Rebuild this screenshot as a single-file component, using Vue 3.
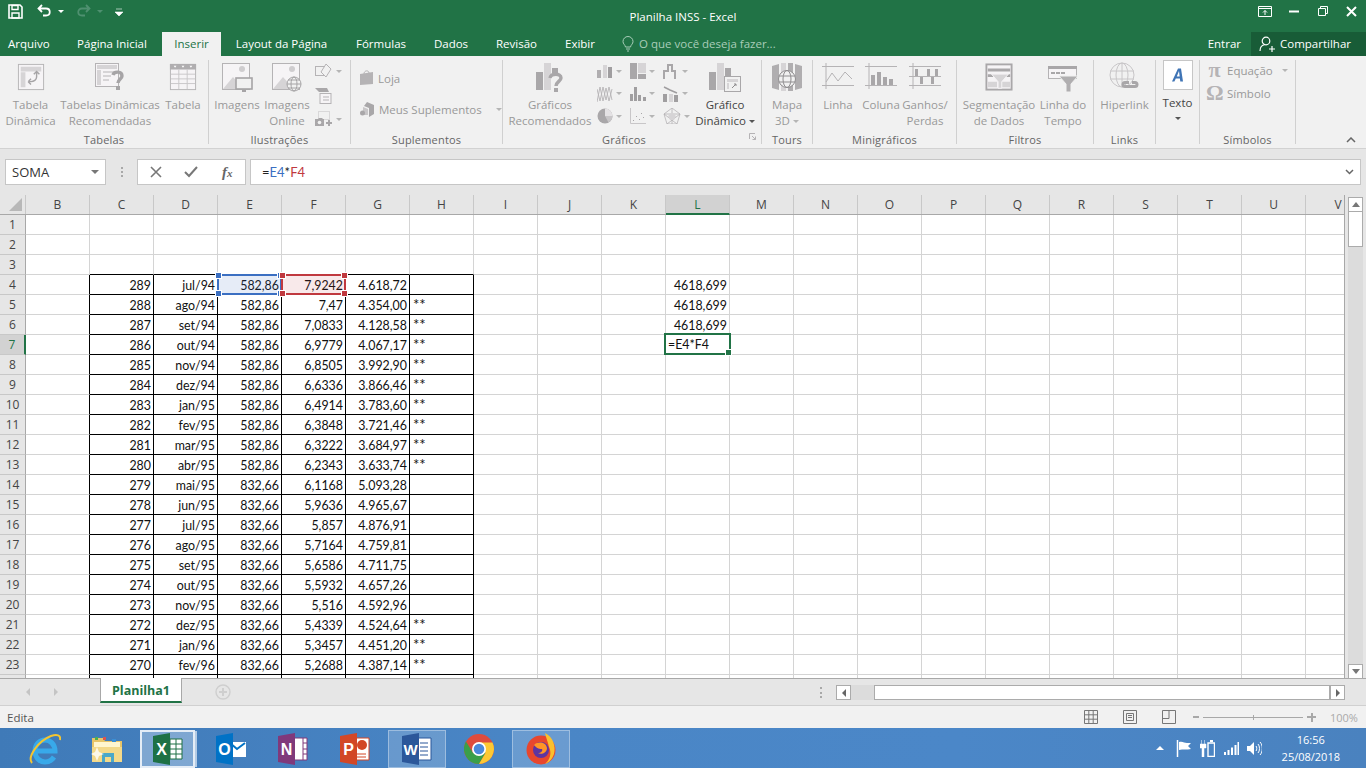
<template>
  <div class="window">
    <!-- title bar -->
    <header class="titlebar">
      <div class="qat">
        <svg class="qat-save" width="15" height="15" viewBox="0 0 15 15"><path d="M1 1h11l2 2v11H1z" fill="none" stroke="#fff" stroke-width="1.6"/><path d="M4 1.500h6v4H4zM4 9h7v5H4z" fill="none" stroke="#fff" stroke-width="1.400"/></svg>
        <svg class="qat-undo" width="15" height="13" viewBox="0 0 15 13"><path d="M5 1 1.500 4.500 5 8M2 4.500h7c5 0 5 7 0 7H6" fill="none" stroke="#fff" stroke-width="1.800"/></svg>
        <span class="qat-caret"></span>
        <svg class="qat-redo" width="15" height="13" viewBox="0 0 15 13"><path d="M10 1l3.500 3.500L10 8M13 4.500H6c-5 0-5 7 0 7h3" fill="none" stroke="#4f9070" stroke-width="1.800"/></svg>
        <span class="qat-caret dim"></span>
        <svg class="qat-more" width="8" height="8" viewBox="0 0 8 8"><path d="M1 1h6M0 4h8L4 8z" fill="#fff" stroke="#fff" stroke-width=".6"/></svg>
      </div>
      <div class="doc-title">Planilha INSS - Excel</div>
      <div class="win-controls">
        <svg width="14" height="11" viewBox="0 0 14 11"><path d="M.5.500h13v10H.500zM1 2.500h12M7 9V4.500M5 6.500l2-2 2 2" fill="none" stroke="#fff"/></svg>
        <svg width="10" height="10" viewBox="0 0 10 10"><path d="M0 5.500h10" stroke="#fff" stroke-width="2"/></svg>
        <svg width="10" height="10" viewBox="0 0 10 10"><path d="M.5 2.500h7v7h-7zM2.500 2.500v-2h7v7h-2" fill="none" stroke="#fff"/></svg>
        <svg width="11" height="11" viewBox="0 0 11 11"><path d="M1 1l9 9M10 1l-9 9" stroke="#fff" stroke-width="2"/></svg>
      </div>
    </header>

    <!-- ribbon tabs -->
    <nav class="tabs">
      <span v-for="t in tabs" :key="t.label" class="tab" :class="{ current: t.current }" :style="{ width: t.width + 'px' }">{{ t.label }}</span>
      <span class="tell-me">
        <svg width="12" height="16" viewBox="0 0 12 16"><path d="M3.500 11C3 8.500 1 8 1 5.500a5 5 0 0 1 10 0C11 8 9 8.500 8.500 11zM4 13h4M5 15h2" fill="none" stroke="#a9cdb9"/></svg>
        O que você deseja fazer...
      </span>
      <span class="signin">Entrar</span>
      <span class="share">
        <svg width="16" height="16" viewBox="0 0 16 16"><circle cx="7" cy="5" r="3.800" fill="none" stroke="#fff" stroke-width="1.200"/><path d="M1 15c0-4 2-6 5-6.500M10 13h6M13 10v6" fill="none" stroke="#fff" stroke-width="1.200"/></svg>
        Compartilhar
      </span>
    </nav>

    <!-- ribbon -->
    <section class="ribbon">
      <div class="group g-tables">
        <div class="group-body">
          <div class="big w61">
            <svg width="28" height="30" viewBox="0 0 30 30"><rect x="1.500" y="1.500" width="27" height="27" fill="#f6f4f6" stroke="#b5b3b5"/><path d="M4 4h22v5H4zM4 10h5v16H4z" fill="#d6d4d6"/><path d="M21 9v6c0 3-3 5-6 5h-3M12 20l3-3M12 20l3 3M18 12l3-3 3 3" fill="none" stroke="#a6a4a6" stroke-width="1.500"/></svg>
            <span>Tabela<br />Dinâmica</span>
          </div>
          <div class="big w100 pull">
            <svg width="32" height="30" viewBox="0 0 32 30"><rect x="1.500" y="1.500" width="23" height="23" fill="#f6f4f6" stroke="#b5b3b5"/><path d="M3 3h20v4H3zM3 8h4v15H3zM9 9h12v2H9zM9 13h8v2H9zM9 17h6v2H9z" fill="#d6d4d6"/><path d="M19 13c1-4 9-4 9 1 0 3-4 3-4 7" fill="none" stroke="#a6a4a6" stroke-width="3.400"/><rect x="22" y="24" width="4" height="4" fill="#a6a4a6"/></svg>
            <span>Tabelas Dinâmicas<br />Recomendadas</span>
          </div>
          <div class="big w46">
            <svg width="28" height="30" viewBox="0 0 30 30"><rect x="1.500" y="1.500" width="27" height="27" fill="#f6f4f6" stroke="#b5b3b5"/><path d="M1 1h28v6H1z" fill="#b0aeb0"/><path d="M5 3h3l-1.500 2zM13.500 3h3L15 5zM22 3h3l-1.500 2z" fill="#fff"/><path d="M2 12h26M2 17h26M2 22h26M10.500 7v21M19.500 7v21" stroke="#c8c6c8" fill="none"/></svg>
            <span>Tabela</span>
          </div>
        </div>
        <div class="group-label">Tabelas</div>
      </div>

      <div class="group g-illus">
        <div class="group-body">
          <div class="big w50 push">
            <svg width="32" height="30" viewBox="0 0 32 30"><rect x="1.500" y="1.500" width="27" height="26" fill="#f6f4f6" stroke="#b5b3b5"/><circle cx="21" cy="7" r="3" fill="#cfcdcf"/><path d="M2 27l10-12 8 9v3z" fill="#d6d4d6"/><rect x="15" y="16" width="16" height="11" fill="#f1f1f1" stroke="#a6a4a6" stroke-width="1.600"/><path d="M21 28h4v2h-4z" fill="#a6a4a6"/></svg>
            <span>Imagens</span>
          </div>
          <div class="big w50">
            <svg width="32" height="30" viewBox="0 0 32 30"><rect x="1.500" y="1.500" width="27" height="26" fill="#f6f4f6" stroke="#b5b3b5"/><circle cx="21" cy="7" r="3" fill="#cfcdcf"/><path d="M2 27l10-12 8 9v3z" fill="#d6d4d6"/><circle cx="23" cy="22" r="7" fill="#f1f1f1" stroke="#a6a4a6"/><ellipse cx="23" cy="22" rx="3" ry="7" fill="none" stroke="#a6a4a6"/><path d="M16 22h14M17 18h12M17 26h12" stroke="#a6a4a6" fill="none"/></svg>
            <span>Imagens<br />Online</span>
          </div>
          <div class="small-col">
            <div class="small-ic">
              <svg width="18" height="16" viewBox="0 0 18 16"><rect x=".5" y="3.500" width="9" height="9" fill="none" stroke="#b5b3b5"/><path d="M11 1l5 5-5 8-5-5z" fill="#f1f1f1" stroke="#b5b3b5"/></svg>
              <i class="caret"></i>
            </div>
            <div class="small-ic">
              <svg width="17" height="17" viewBox="0 0 17 17"><path d="M0 1h12l2 4H4z" fill="#a9a7a9"/><rect x="5" y="6.500" width="11" height="10" fill="#f6f4f6" stroke="#b5b3b5"/><path d="M8 10h6M8 13h6" stroke="#b5b3b5"/></svg>
            </div>
            <div class="small-ic">
              <svg width="18" height="16" viewBox="0 0 18 16"><rect x="3.500" y=".5" width="11" height="8" fill="none" stroke="#c0bec0" stroke-dasharray="1 1"/><path d="M0 8h3l1-1h3l1 1h1v7H0z" fill="#a9a7a9"/><path d="M11 12h6M14 9v6" stroke="#a9a7a9" stroke-width="2"/><circle cx="4.500" cy="11.500" r="1.800" fill="#f1f1f1"/></svg>
              <i class="caret"></i>
            </div>
          </div>
        </div>
        <div class="group-label">Ilustrações</div>
      </div>

      <div class="group g-addins">
        <div class="group-body addins">
          <div class="line-btn">
            <svg width="14" height="16" viewBox="0 0 14 16"><path d="M0 4l13-2v12L0 15z" fill="#b5b3b5"/><path d="M4 4c0-4 5-4 5-1" fill="none" stroke="#b5b3b5"/></svg>
            Loja
          </div>
          <div class="line-btn">
            <svg width="15" height="15" viewBox="0 0 15 15"><path d="M7 0l7 3v9l-5 3V6L4 4z" fill="#a9a7a9"/><path d="M3 5l5 2v6H3z" fill="#c8c6c8"/><circle cx="2.500" cy="11" r="2.500" fill="#a9a7a9"/></svg>
            Meus Suplementos
            <i class="caret wide"></i>
          </div>
        </div>
        <div class="group-label">Suplementos</div>
      </div>

      <div class="group g-charts">
        <div class="group-body">
          <div class="big w94">
            <svg width="28" height="30" viewBox="0 0 28 30"><path d="M0 10h7v18H0z" fill="#a9a7a9"/><path d="M8 1h7v27H8z" fill="#d6d4d6"/><path d="M16 6h6v5h-6z" fill="#a9a7a9"/><path d="M14 16c1-5 11-5 11 0 0 3-5 4-5 8" fill="none" stroke="#a9a7a9" stroke-width="3.400"/><rect x="18" y="26" width="4" height="4" fill="#a9a7a9"/></svg>
            <span>Gráficos<br />Recomendados</span>
          </div>
          <div class="chart-grid">
            <div class="small-ic">
              <svg width="16" height="16" viewBox="0 0 16 16"><path d="M0 7h4v8H0z" fill="#b0aeb0"/><path d="M6 2h4v13H6z" fill="#d6d4d6"/><path d="M11 4h4v11h-4z" fill="#a09ea0"/></svg>
              <i class="caret"></i>
            </div>
            <div class="small-ic">
              <svg width="16" height="16" viewBox="0 0 16 16"><path d="M0 0h7v16H0z" fill="#a9a7a9"/><path d="M8 0h8v10H8z" fill="#d6d4d6"/><path d="M8 11h8v5H8z" fill="#a9a7a9"/></svg>
              <i class="caret"></i>
            </div>
            <div class="small-ic">
              <svg width="16" height="16" viewBox="0 0 16 16"><path d="M0 16V7h4V1h6v6h3v9h-2V9H8V3H6v6H2v7z" fill="#a9a7a9"/></svg>
              <i class="caret"></i>
            </div>
            <div class="small-ic">
              <svg width="16" height="18" viewBox="0 0 16 18"><path d="M0 17 3 2l3 14 3-13 3 13 3-12M0 4l3 12 3-14 3 13 3-13 3 13" fill="none" stroke="#b5b3b5" stroke-width=".9"/></svg>
              <i class="caret"></i>
            </div>
            <div class="small-ic">
              <svg width="16" height="16" viewBox="0 0 16 16"><path d="M0 8h3v7H0zM8 9h3v6H8zM13 11h3v4h-3z" fill="#a09ea0"/><path d="M4 1h3v14H4z" fill="#a09ea0"/></svg>
              <i class="caret"></i>
            </div>
            <div class="small-ic">
              <svg width="16" height="16" viewBox="0 0 16 16"><path d="M0 8h4v8H0zM11 9h4v7h-4z" fill="#a09ea0"/><path d="M6 8h4v8H6z" fill="#d6d4d6"/><path d="M1 1l6 3 7 3" fill="none" stroke="#a09ea0" stroke-width="1.500"/></svg>
              <i class="caret"></i>
            </div>
            <div class="small-ic">
              <svg width="16" height="16" viewBox="0 0 16 16"><circle cx="8" cy="8" r="7.500" fill="#a9a7a9"/><path d="M8 8V.5A7.500 7.500 0 0 1 15.500 8z" fill="#e4e2e4"/><path d="M8 8h7.500a7.500 7.500 0 0 1-4 6.500z" fill="#c8c6c8"/></svg>
              <i class="caret"></i>
            </div>
            <div class="small-ic">
              <svg width="16" height="16" viewBox="0 0 16 16"><path d="M.5 0v15.500H16" fill="none" stroke="#c8c6c8"/><path d="M3 12h1v1H3zM6 8h1v1H6zM9 11h1v1H9zM11 5h1v1h-1zM13 9h1v1h-1z" fill="#a9a7a9"/></svg>
              <i class="caret"></i>
            </div>
            <div class="small-ic">
              <svg width="18" height="16" viewBox="0 0 18 16"><path d="M9 0l8 6-3 10H4L1 6zM9 0v16M1 6l13 10M17 6 4 16M1 6h16" fill="none" stroke="#b5b3b5" stroke-width=".8"/><path d="M9 4l4 4-2 4H7L5 8z" fill="#d6d4d6"/></svg>
              <i class="caret"></i>
            </div>
          </div>
          <div class="big pivot">
            <svg width="32" height="30" viewBox="0 0 32 30"><path d="M0 10h7v18H0z" fill="#a9a7a9"/><path d="M8 1h7v27H8z" fill="#d6d4d6"/><path d="M16 6h6v10h-6z" fill="#a9a7a9"/><rect x="15.500" y="14.500" width="16" height="15" fill="#f1f1f1" stroke="#a9a7a9"/><path d="M18 17h11v3H18zM18 21h2v6h-2z" fill="#d6d4d6"/><path d="M23 26l4-4M25 22h2v2" fill="none" stroke="#8f8d8f"/></svg>
            <span>Gráfico<br />Dinâmico<i class="caret dark"></i></span>
          </div>
        </div>
        <div class="group-label charts-label">Gráficos</div>
        <svg class="launcher" width="7" height="7" viewBox="0 0 7 7"><path d="M.5 6V.5H6M3 3l3.500 3.500M6.500 3.500v3h-3" fill="none" stroke="#b5b3b5"/></svg>
      </div>

      <div class="group g-tours">
        <div class="group-body">
          <div class="big w50">
            <svg width="30" height="30" viewBox="0 0 30 30"><path d="M0 4l7-2v26l-7-2zM9 1h5v28H9zM16 1h5v28h-5zM23 2l7 2v22l-7 2z" fill="#b0aeb0"/><path d="M9 1h5v28H9z" fill="#d6d4d6"/><circle cx="15" cy="17" r="8.500" fill="#f1f1f1" stroke="#8f8d8f"/><ellipse cx="15" cy="17" rx="4" ry="8.500" fill="none" stroke="#8f8d8f"/><path d="M7 14h16M7 20h16" stroke="#8f8d8f"/></svg>
            <span>Mapa<br />3D<i class="caret"></i></span>
          </div>
        </div>
        <div class="group-label">Tours</div>
      </div>

      <div class="group g-spark">
        <div class="group-body">
          <div class="big w50">
            <svg width="32" height="30" viewBox="0 0 32 30"><path d="M0 4.500h32M0 23.500h32M4 1v26" stroke="#b5b3b5" fill="none"/><path d="M4 20l6-9 6 8 7-9 7 7" fill="none" stroke="#b5b3b5"/></svg>
            <span>Linha</span>
          </div>
          <div class="big w36">
            <svg width="32" height="30" viewBox="0 0 32 30"><path d="M0 4.500h32M0 23.500h32M4 1v26" stroke="#b5b3b5" fill="none"/><path d="M6 13h4v10H6zM12 10h4v13h-4zM18 15h4v8h-4zM24 17h4v6h-4z" fill="#a9a7a9"/></svg>
            <span>Coluna</span>
          </div>
          <div class="big w52">
            <svg width="32" height="30" viewBox="0 0 32 30"><path d="M0 14.500h32M4 1v26M0 5M0 23.500h32M0 4.500h32" stroke="#b5b3b5" fill="none"/><path d="M6 7h3v7H6zM18 7h3v7h-3zM26 7h3v7h-3zM11 15h3v7h-3zM22 15h3v7h-3z" fill="#a9a7a9"/></svg>
            <span>Ganhos/<br />Perdas</span>
          </div>
        </div>
        <div class="group-label">Minigráficos</div>
      </div>

      <div class="group g-filters">
        <div class="group-body">
          <div class="big w78 push">
            <svg width="28" height="30" viewBox="0 0 30 30"><rect x="1.500" y="1.500" width="27" height="27" fill="#f6f4f6" stroke="#a9a7a9" stroke-width="2"/><path d="M3 6h24v3H3zM3 12h24v3H3z" fill="#a9a7a9"/><path d="M3 20h10v6H3zM18 20h9v6h-9z" fill="#d6d4d6"/><path d="M7 12h18l-7 8v7h-4v-7z" fill="#d6d4d6" stroke="#f6f4f6"/></svg>
            <span>Segmentação<br />de Dados</span>
          </div>
          <div class="big w50">
            <svg width="30" height="30" viewBox="0 0 30 30"><rect x=".5" y="4.500" width="28" height="12" fill="#f6f4f6" stroke="#b5b3b5"/><path d="M0 4h29v3H0z" fill="#a9a7a9"/><path d="M3 10h4v2H3zM8 10h4v2H8zM13 10h4v2h-4z" fill="#a9a7a9"/><path d="M11 14h19l-7 8v8h-5v-8z" fill="#b0aeb0" stroke="#f1f1f1"/></svg>
            <span>Linha do<br />Tempo</span>
          </div>
        </div>
        <div class="group-label">Filtros</div>
      </div>

      <div class="group g-links">
        <div class="group-body">
          <div class="big w61">
            <svg width="32" height="30" viewBox="0 0 32 30"><circle cx="13" cy="13" r="12" fill="none" stroke="#c8c6c8"/><ellipse cx="13" cy="13" rx="6" ry="12" fill="none" stroke="#c8c6c8"/><path d="M1 9h24M1 17h24M13 1v24" stroke="#c8c6c8" fill="none"/><path d="M16 26a3.500 3.500 0 0 1 0-7h4v3h-4a.5.5 0 0 0 0 1h10a.5.5 0 0 0 0-1h-3v-3h3a3.500 3.500 0 0 1 0 7z" fill="#a9a7a9"/></svg>
            <span>Hiperlink</span>
          </div>
        </div>
        <div class="group-label">Links</div>
      </div>

      <div class="group g-text">
        <div class="text-btn">
          <div class="text-box">
            <svg width="12" height="14" viewBox="0 0 12 14"><path d="M0 13.500 6 .5h3l2 13H8.300l-.4-3H3.800l-1.400 3zM4.800 8.500h2.900L7 3z" fill="#3f74b5"/></svg>
          </div>
          <span>Texto</span>
          <i class="caret dark"></i>
        </div>
      </div>

      <div class="group g-symbols">
        <div class="group-body symbols">
          <div class="line-btn sym"><b class="glyph">π</b> Equação <i class="caret sym-caret"></i></div>
          <div class="line-btn sym"><b class="glyph">Ω</b> Símbolo</div>
        </div>
        <div class="group-label">Símbolos</div>
      </div>

      <svg class="collapse" width="10" height="6" viewBox="0 0 10 6"><path d="M1 5l4-4 4 4" fill="none" stroke="#666" stroke-width="1.500"/></svg>
    </section>

    <!-- formula bar -->
    <section class="formula-band">
      <div class="name-box">SOMA<i class="caret name-caret"></i></div>
      <div class="grip"></div>
      <div class="fx-box">
        <svg width="12" height="12" viewBox="0 0 12 12"><path d="M1 1l10 10M11 1 1 11" stroke="#777" stroke-width="1.600"/></svg>
        <svg width="14" height="12" viewBox="0 0 14 12"><path d="M1 6l4 4 8-9" fill="none" stroke="#777" stroke-width="2"/></svg>
        <span class="fx">f<small>x</small></span>
      </div>
      <div class="formula-input">
        <span>=<em class="ref-e">E4</em>*<em class="ref-f">F4</em></span>
        <svg width="9" height="6" viewBox="0 0 9 6"><path d="M1 1l3.500 3.500L8 1" fill="none" stroke="#666" stroke-width="1.500"/></svg>
      </div>
    </section>

    <!-- worksheet -->
    <section class="sheet-wrap">
      <div class="sheet">
        <div class="sheet-row head-row">
          <div class="corner"><i></i></div>
          <div v-for="c in columns" :key="c" class="col-head" :class="{ active: c === 'L' }">{{ c }}</div>
        </div>
        <div class="grid-area">
          <div v-for="r in rowNums" :key="r" class="sheet-row">
            <!-- row 24 only peeks out under the last full row, its number stays hidden -->
            <div class="row-head" :class="{ active: r === 7 }">{{ r < 24 ? r : '' }}</div>
            <div v-for="c in columns" :key="c" class="cell" :class="cellClass(r, c)">{{ cellText(r, c) }}</div>
          </div>
        </div>
        <!-- formula reference highlights and the cell being edited -->
        <div class="ref-range blue"><i class="tl"></i><i class="tr"></i><i class="bl"></i><i class="br"></i></div>
        <div class="ref-range red"><i class="tl"></i><i class="tr"></i><i class="bl"></i><i class="br"></i></div>
        <div class="edit-cell">=E4*F4<i></i></div>
      </div>
      <div class="vscroll">
        <div class="vs-btn"><i class="tri-up"></i></div>
        <div class="vs-thumb"></div>
        <div class="vs-track"></div>
        <div class="vs-btn"><i class="tri-down"></i></div>
      </div>
    </section>

    <!-- sheet tabs -->
    <section class="tabbar">
      <div class="tab-nav">
        <i class="tri-left"></i>
        <i class="tri-right"></i>
      </div>
      <div class="sheet-tab">Planilha1</div>
      <svg class="add-sheet" width="16" height="16" viewBox="0 0 16 16"><circle cx="8" cy="8" r="7" fill="none" stroke="#cfcfcf" stroke-width="1.400"/><path d="M8 4v8M4 8h8" stroke="#cfcfcf" stroke-width="2"/></svg>
      <div class="hgrip"></div>
      <div class="hscroll">
        <div class="hs-btn"><i class="tri-left dark"></i></div>
        <div class="hs-track"></div>
        <div class="hs-thumb"></div>
        <div class="hs-btn"><i class="tri-right dark"></i></div>
      </div>
    </section>

    <!-- status bar -->
    <footer class="statusbar">
      <span>Edita</span>
      <div class="views">
        <svg width="14" height="14" viewBox="0 0 14 14"><path d="M.5.500h13v13H.500zM.5 4.800h13M.5 9.200h13M4.800.5v13M9.200.5v13" fill="none" stroke="#777"/></svg>
        <svg width="14" height="14" viewBox="0 0 14 14"><path d="M.5.500h13v13H.500zM3.500 3.500h7v7h-7zM5 5.500h4M5 7.500h4" fill="none" stroke="#777"/></svg>
        <svg width="14" height="14" viewBox="0 0 14 14"><path d="M.5.500h13v13H.500zM.5 8.500h6.500V.5" fill="none" stroke="#777"/></svg>
      </div>
      <div class="zoom">
        <i class="z-minus"></i>
        <div class="z-slider"><i></i></div>
        <i class="z-plus"></i>
        <span>100%</span>
      </div>
    </footer>

    <!-- windows taskbar -->
    <footer class="taskbar">
      <div class="task">
        <svg width="32" height="32" viewBox="0 0 32 32"><path d="M8 18h18c0-7-5-11-10-11S6 11 6 18s5 11 10 11c4 0 7-2 9-5" fill="none" stroke="#38a9ea" stroke-width="5"/><path d="M3 30C-2 24 9 8 22 3c6-2 10-1 9 4" fill="none" stroke="#f4c531" stroke-width="2"/></svg>
      </div>
      <div class="task">
        <svg width="32" height="32" viewBox="0 0 32 32"><path d="M1 5h11l2 3h17v21H1z" fill="#e8c568"/><path d="M3 9h26v8H3z" fill="#fff6cf"/><path d="M4 4h3v3H4z" fill="#4caf50"/><path d="M12 4h3v3h-3z" fill="#d9534f"/><path d="M21 6h4v3h-4z" fill="#3a8fd6"/><path d="M1 14h30v15H1z" fill="#f3d98a"/><path d="M11 20h12v9h-3v-5h-6v5h-3z" fill="#4aa8c9"/><path d="M6 14l2 5 5 2-5 2-2 5-2-5-4-2 4-2z" fill="#fff" opacity=".8"/></svg>
      </div>
      <div class="task open current-stack">
        <svg width="30" height="32" viewBox="0 0 30 32"><path d="M12 6h17v20H12z" fill="#fff" stroke="#1e7145"/><path d="M17 6v20M23 6v20M12 11h17M12 16h17M12 21h17" stroke="#1e7145"/><path d="M0 3l17-3v32L0 29z" fill="#1e7145"/><text x="8.500" y="22" text-anchor="middle" font-size="16" font-weight="700" font-family="Liberation Sans, sans-serif" fill="#fff">X</text></svg>
      </div>
      <div class="task">
        <svg width="30" height="32" viewBox="0 0 30 32"><path d="M13 9h17v15H13z" fill="#fff"/><path d="M14 10l7 6 8-6" fill="none" stroke="#0072c6" stroke-width="2"/><path d="M0 3l17-3v32L0 29z" fill="#0072c6"/><text x="8.500" y="22" text-anchor="middle" font-size="16" font-weight="700" font-family="Liberation Sans, sans-serif" fill="#fff">O</text></svg>
      </div>
      <div class="task">
        <svg width="30" height="32" viewBox="0 0 30 32"><path d="M12 5h17v22H12z" fill="#fff" stroke="#80397b"/><path d="M25 5v22M25 10h4M25 16h4M25 21h4" stroke="#80397b"/><path d="M0 3l17-3v32L0 29z" fill="#80397b"/><text x="8.500" y="22" text-anchor="middle" font-size="16" font-weight="700" font-family="Liberation Sans, sans-serif" fill="#fff">N</text></svg>
      </div>
      <div class="task">
        <svg width="30" height="32" viewBox="0 0 30 32"><path d="M12 5h17v22H12z" fill="#fff" stroke="#d24726"/><circle cx="22" cy="12" r="5" fill="#d24726"/><path d="M16 21h10M16 24h10" stroke="#d24726"/><path d="M0 3l17-3v32L0 29z" fill="#d24726"/><text x="8.500" y="22" text-anchor="middle" font-size="16" font-weight="700" font-family="Liberation Sans, sans-serif" fill="#fff">P</text></svg>
      </div>
      <div class="task open">
        <svg width="30" height="32" viewBox="0 0 30 32"><path d="M12 5h17v22H12z" fill="#fff" stroke="#2b579a"/><path d="M18 10h8M18 14h8M18 18h8M18 22h8" stroke="#2b579a"/><path d="M0 3l17-3v32L0 29z" fill="#2b579a"/><text x="8.500" y="22" text-anchor="middle" font-size="15" font-weight="700" font-family="Liberation Sans, sans-serif" fill="#fff">W</text></svg>
      </div>
      <div class="task">
        <svg width="30" height="30" viewBox="0 0 30 30"><circle cx="15" cy="15" r="15" fill="#dd4b3e"/><path d="M15 15 2 22.500A15 15 0 0 0 15 30l0 0 7-12z" fill="#3a9f4a"/><path d="M2.500 23A15 15 0 0 1 2 7.500L9 19z" fill="#3a9f4a"/><path d="M15 8.500h13.500A15 15 0 0 1 15 30l6.500-11z" fill="#fcc934"/><circle cx="15" cy="15" r="7" fill="#fff"/><circle cx="15" cy="15" r="5.300" fill="#4a89dc"/></svg>
      </div>
      <div class="task open">
        <svg width="30" height="33" viewBox="0 0 30 33"><circle cx="15" cy="18" r="14.500" fill="#e8472e"/><path d="M19 1c8 4 11 13 9 21-2 6-6 9-9 10 5-4 7-11 4-17-1-5-3-9-4-14z" fill="#fbc02d"/><circle cx="15" cy="18" r="8" fill="#5e35a1"/><path d="M8 13c4-4 12-3 13 3 0 5-6 7-9 5 3 0 5-2 4-4-2 0-5 0-8-4z" fill="#ff9526"/></svg>
      </div>
      <div class="tray">
        <i class="tray-up"></i>
        <svg width="16" height="17" viewBox="0 0 16 17"><path d="M1.500 0v17" stroke="#fff" stroke-width="1.500"/><path d="M3 2c4-1 5 1 8 1l4 0-3 3 3 3c-4 1-8 0-12 1z" fill="#fff"/></svg>
        <svg width="15" height="17" viewBox="0 0 15 17"><path d="M1.500 0v4M4.500 0v4M0 4h6v4H4v9H2V8H0z" fill="#fff" stroke="#fff" stroke-width=".5"/><path d="M8 3h6.500v13.500H8z" fill="none" stroke="#fff" stroke-width="1.400"/><path d="M10 1h3" stroke="#fff" stroke-width="2"/></svg>
        <svg width="15" height="13" viewBox="0 0 15 13"><path d="M0 10h2v3H0zM3.500 8h2v5h-2zM7 5.500h2V13H7zM10.500 3h2v10h-2z" fill="#fff"/><path d="M13.500 0H15v13h-1.500z" fill="#fff"/></svg>
        <svg width="15" height="15" viewBox="0 0 15 15"><path d="M0 5h3l4-4v13L3 10H0z" fill="#fff"/><path d="M9 5c1 1 1 4 0 5M11 3c2 2 2 7 0 9M13 1c3 3 3 10 0 13" fill="none" stroke="#fff"/></svg>
        <div class="clock">16:56<br />25/08/2018</div>
      </div>
    </footer>
  </div>
</template>

<script setup>
const tabs = [
  { label: 'Arquivo', width: 62 },
  { label: 'Página Inicial', width: 100 },
  { label: 'Inserir', width: 59, current: true },
  { label: 'Layout da Página', width: 121 },
  { label: 'Fórmulas', width: 78 },
  { label: 'Dados', width: 62 },
  { label: 'Revisão', width: 69 },
  { label: 'Exibir', width: 58 },
]

const columns = 'BCDEFGHIJKLMNOPQRSTUV'.split('')
const rowNums = Array.from({ length: 24 }, (_, i) => i + 1)
const boxedCols = 'CDEFGH'

// rows 4 to 23 of the sheet, columns C to H
const data = [
  ['289', 'jul/94', '582,86', '7,9242', '4.618,72', ''],
  ['288', 'ago/94', '582,86', '7,47', '4.354,00', '**'],
  ['287', 'set/94', '582,86', '7,0833', '4.128,58', '**'],
  ['286', 'out/94', '582,86', '6,9779', '4.067,17', '**'],
  ['285', 'nov/94', '582,86', '6,8505', '3.992,90', '**'],
  ['284', 'dez/94', '582,86', '6,6336', '3.866,46', '**'],
  ['283', 'jan/95', '582,86', '6,4914', '3.783,60', '**'],
  ['282', 'fev/95', '582,86', '6,3848', '3.721,46', '**'],
  ['281', 'mar/95', '582,86', '6,3222', '3.684,97', '**'],
  ['280', 'abr/95', '582,86', '6,2343', '3.633,74', '**'],
  ['279', 'mai/95', '832,66', '6,1168', '5.093,28', ''],
  ['278', 'jun/95', '832,66', '5,9636', '4.965,67', ''],
  ['277', 'jul/95', '832,66', '5,857', '4.876,91', ''],
  ['276', 'ago/95', '832,66', '5,7164', '4.759,81', ''],
  ['275', 'set/95', '832,66', '5,6586', '4.711,75', ''],
  ['274', 'out/95', '832,66', '5,5932', '4.657,26', ''],
  ['273', 'nov/95', '832,66', '5,516', '4.592,96', ''],
  ['272', 'dez/95', '832,66', '5,4339', '4.524,64', '**'],
  ['271', 'jan/96', '832,66', '5,3457', '4.451,20', '**'],
  ['270', 'fev/96', '832,66', '5,2688', '4.387,14', '**'],
]

const cellText = (r, c) => {
  if (c === 'L' && r >= 4 && r <= 6) return '4618,699'
  const i = boxedCols.indexOf(c)
  if (i < 0 || r < 4 || r > 23) return ''
  return data[r - 4][i]
}

const cellClass = (r, c) => {
  const boxed = boxedCols.includes(c)
  return {
    'edge-right': r >= 4 && (boxed || c === 'B'),
    'edge-bottom': boxed && r >= 3,
    'left-text': c === 'H',
  }
}
</script>

<style scoped>
.window {
  width: 1366px;
  height: 768px;
  overflow: hidden;
  display: flex;
  flex-direction: column;
  background: #e6e6e6;
  font-family: "Open Sans", "Noto Sans", sans-serif;
  font-size: 11.5px;
  color: #444;
}

/* title bar */
.titlebar {
  height: 32px;
  flex: none;
  background: #217346;
  display: flex;
  position: relative;
  color: #fff;
}
.qat {
  display: flex;
  align-items: flex-start;
  padding: 4px 0 0 8px;
}
.qat-undo { margin: 0 0 0 14px; }
.qat-caret {
  width: 0;
  height: 0;
  margin: 6px 0 0 6px;
  border: 3px solid transparent;
  border-top: 3px solid #fff;
}
.qat-caret.dim { border-top-color: #4f9070; }
.qat-redo { margin-left: 12px; }
.qat-more { margin: 4px 0 0 12px; }
.doc-title {
  position: absolute;
  left: 0;
  right: 0;
  top: 8px;
  text-align: center;
  line-height: 18px;
}
.win-controls {
  margin-left: auto;
  width: 116px;
  height: 22px;
  display: grid;
  grid-template-columns: repeat(4, 29px);
  align-items: center;
  justify-items: center;
}

/* tabs */
.tabs {
  height: 24px;
  flex: none;
  background: #217346;
  display: flex;
  align-items: stretch;
  color: #fff;
  line-height: 24px;
}
.tab { text-align: center; flex: none; }
.tab:first-child { text-align: left; padding-left: 8px; box-sizing: border-box; }
.tab.current { background: #f1f1f1; color: #217346; }
.tell-me {
  margin-left: 13px;
  color: #a9cdb9;
  display: flex;
  align-items: center;
  gap: 5px;
}
.signin { margin-left: auto; padding-right: 10px; }
.share {
  width: 115px;
  flex: none;
  box-sizing: border-box;
  background: #185c37;
  display: flex;
  align-items: center;
  gap: 5px;
  padding-left: 8px;
}

/* ribbon */
.ribbon {
  height: 93px;
  flex: none;
  box-sizing: border-box;
  background: #f1f1f1;
  border-bottom: 1px solid #d2d2d2;
  padding-top: 4px;
  display: flex;
  align-items: flex-start;
  position: relative;
  color: #999;
}
.group {
  height: 84px;
  flex: none;
  box-sizing: border-box;
  border-right: 1px solid #d0d0d0;
  display: flex;
  flex-direction: column;
  position: relative;
}
.g-tables { width: 209px; }
.g-illus { width: 142px; }
.g-addins { width: 152px; }
.g-charts { width: 259px; }
.g-tours { width: 51px; }
.g-spark { width: 144px; }
.g-filters { width: 137px; }
.g-links { width: 62px; }
.g-text { width: 44px; }
.g-symbols { width: 96px; }
.group-body {
  flex: 1;
  display: flex;
  padding-top: 2px;
  min-height: 0;
}
.group-label {
  height: 16px;
  margin-bottom: -4px;
  line-height: 16px;
  text-align: center;
  color: #666;
  font-size: 11px;
  letter-spacing: .2px;
}
.charts-label { padding-right: 16px; }
.big {
  flex: none;
  display: flex;
  flex-direction: column;
  align-items: center;
  text-align: center;
  line-height: 16px;
  white-space: nowrap;
}
.big svg { height: 30px; margin-bottom: 5px; flex: none; }
.w36 { width: 36px; }
.w46 { width: 46px; }
.w50 { width: 50px; }
.w52 { width: 52px; }
.w61 { width: 61px; }
.w78 { width: 78px; }
.w94 { width: 94px; }
.w100 { width: 100px; }
.pull { margin-left: -1px; }
.push { margin-left: 3px; }
.pivot { width: 60px; margin-left: -1px; color: #444; }
.small-col {
  display: flex;
  flex-direction: column;
  margin-left: 3px;
  gap: 6px;
}
.small-ic {
  display: flex;
  align-items: center;
  height: 18px;
}
.caret {
  display: inline-block;
  width: 0;
  height: 0;
  margin-left: 3px;
  border: 3px solid transparent;
  border-top: 3px solid #b5b5b5;
  border-bottom-width: 0;
  vertical-align: middle;
}
.caret.dark { border-top-color: #555; }
.caret.wide { margin-left: 10px; }
.addins {
  flex-direction: column;
  padding: 9px 0 0 9px;
  gap: 13px;
}
.line-btn {
  display: flex;
  align-items: center;
  gap: 4px;
  height: 18px;
  white-space: nowrap;
}
.chart-grid {
  display: grid;
  grid-template-columns: 33px 33px 33px;
  grid-auto-rows: 22.5px;
  height: 66px;
}
.launcher {
  position: absolute;
  right: 5px;
  bottom: 4px;
}
.text-btn {
  display: flex;
  flex-direction: column;
  align-items: center;
  color: #444;
}
.text-box {
  width: 30px;
  height: 30px;
  box-sizing: border-box;
  border: 1px solid #c6c6c6;
  background: #fff;
  display: flex;
  align-items: center;
  justify-content: center;
}
.text-btn span { line-height: 16px; margin-top: 5px; }
.text-btn .caret { margin: 6px 0 0; }
.symbols {
  flex-direction: column;
  padding: 1px 0 0 6px;
  gap: 5px;
}
.sym { gap: 4px; }
.sym-caret { margin-left: 5px; }
.glyph {
  font-family: "Liberation Serif", serif;
  font-size: 22px;
  line-height: 18px;
  font-weight: 700;
  width: 17px;
  text-align: center;
  color: #b5b3b5;
}
.collapse {
  position: absolute;
  right: 10px;
  bottom: 5px;
}

/* formula bar */
.formula-band {
  height: 41px;
  flex: none;
  box-sizing: border-box;
  background: #e6e6e6;
  padding: 10px 5px 5px;
  display: flex;
}
.name-box {
  width: 101px;
  box-sizing: border-box;
  border: 1px solid #c6c6c6;
  background: #fff;
  padding-left: 6px;
  font-size: 13px;
  line-height: 24px;
  color: #333;
  display: flex;
  align-items: center;
}
.name-caret { margin-left: auto; margin-right: 6px; border: 4px solid transparent; border-top: 4px solid #777; border-bottom-width: 0; }
.grip {
  width: 2px;
  height: 10px;
  margin: 8px 14px 0 15px;
  border-left: 2px dotted #a8a8a8;
  box-sizing: border-box;
}
.fx-box {
  width: 109px;
  box-sizing: border-box;
  border: 1px solid #c6c6c6;
  background: #fff;
  display: grid;
  grid-template-columns: repeat(3, 1fr);
  align-items: center;
  justify-items: center;
}
.fx {
  font-family: "Liberation Serif", serif;
  font-style: italic;
  font-weight: 700;
  font-size: 15px;
  color: #666;
}
.fx small { font-size: 11px; }
.formula-input {
  flex: 1;
  margin-left: 4px;
  box-sizing: border-box;
  border: 1px solid #c6c6c6;
  background: #fff;
  padding: 0 6px 0 11px;
  display: flex;
  align-items: center;
  justify-content: space-between;
  font-family: Lato, sans-serif;
  font-size: 13px;
  color: #222;
}
.formula-input em { font-style: normal; }
.ref-e { color: #3b6fc2; }
.ref-f { color: #c0393f; }

/* worksheet */
.sheet-wrap {
  height: 489px;
  flex: none;
  padding-top: 5px;
  box-sizing: border-box;
  display: flex;
  background: #e6e6e6;
  border-bottom: 1px solid #a8a8a8;
}
.sheet {
  width: 1345px;
  flex: none;
  overflow: hidden;
  position: relative;
  border-right: 1px solid #a8a8a8;
  box-sizing: border-box;
}
.sheet-row {
  display: flex;
  height: 20px;
}
.head-row {
  font-size: 12px;
  line-height: 19px;
  color: #444;
  border-bottom: 1px solid #a8a8a8;
  box-sizing: border-box;
}
.corner {
  width: 26px;
  flex: none;
  position: relative;
  box-sizing: border-box;
  border-right: 1px solid #c8c8c8;
}
.corner i {
  position: absolute;
  right: 3px;
  bottom: 3px;
  width: 0;
  height: 0;
  border-style: solid;
  border-width: 0 0 13px 13px;
  border-color: transparent transparent #b8b8b8 transparent;
}
.col-head {
  width: 64px;
  flex: none;
  box-sizing: border-box;
  border-right: 1px solid #c8c8c8;
  text-align: center;
}
.col-head:last-child { border-right: 0; }
.col-head.active {
  background: #d2d2d2;
  color: #217346;
  border-bottom: 2px solid #217346;
  height: 20px;
}
.grid-area { background: #fff; }
.row-head {
  width: 26px;
  flex: none;
  box-sizing: border-box;
  background: #e6e6e6;
  border-right: 1px solid #a8a8a8;
  border-bottom: 1px solid #c8c8c8;
  text-align: center;
  font-size: 12px;
  line-height: 19px;
  color: #444;
}
.row-head.active {
  background: #d2d2d2;
  color: #217346;
  border-right: 2px solid #217346;
}
.cell {
  width: 64px;
  flex: none;
  box-sizing: border-box;
  border-right: 1px solid #d4d4d4;
  border-bottom: 1px solid #d4d4d4;
  padding: 0 2px;
  text-align: right;
  font-family: Lato, sans-serif;
  font-size: 12.4px;
  line-height: 21px;
  height: 20px;
  color: #111;
  white-space: nowrap;
  overflow: hidden;
}
.cell.edge-right { border-right-color: #000; }
.cell.edge-bottom { border-bottom-color: #000; }
.cell.left-text { text-align: left; padding-left: 3px; font-size: 15px; line-height: 19px; }
.ref-range {
  position: absolute;
  top: 79px;
  width: 65px;
  height: 21px;
  box-sizing: border-box;
  border: 2px solid;
}
.ref-range.blue { left: 217px; border-color: #3b6fc2; background: rgba(59, 111, 194, .13); }
.ref-range.red { left: 281px; border-color: #c0393f; background: rgba(192, 57, 63, .11); }
.ref-range i {
  position: absolute;
  width: 5px;
  height: 5px;
  box-shadow: 0 0 0 1px #fff;
}
.ref-range.blue i { background: #3b6fc2; }
.ref-range.red i { background: #c0393f; }
.ref-range .tl { left: -3px; top: -3px; }
.ref-range .tr { right: -3px; top: -3px; }
.ref-range .bl { left: -3px; bottom: -3px; }
.ref-range .br { right: -3px; bottom: -3px; }
.edit-cell {
  position: absolute;
  left: 664px;
  top: 138px;
  width: 67px;
  height: 22px;
  box-sizing: border-box;
  border: 2px solid #217346;
  background: #fff;
  padding-left: 2px;
  font-family: Lato, sans-serif;
  font-size: 12.4px;
  line-height: 20px;
  color: #111;
}
.edit-cell i {
  position: absolute;
  right: -2px;
  bottom: -2px;
  width: 5px;
  height: 5px;
  background: #217346;
  box-shadow: 0 0 0 1px #fff;
}
.vscroll {
  margin: 2px 0 -1px 3px;
  width: 15px;
  flex: none;
  display: flex;
  flex-direction: column;
}
.vs-btn {
  height: 15px;
  flex: none;
  box-sizing: border-box;
  border: 1px solid #ababab;
  background: #fff;
  display: flex;
  align-items: center;
  justify-content: center;
}
.vs-thumb {
  height: 35px;
  flex: none;
  box-sizing: border-box;
  border: 1px solid #ababab;
  border-top: 0;
  background: #fff;
}
.vs-track { flex: 1; background: #dcdcdc; }
.tri-up, .tri-down {
  width: 0;
  height: 0;
  border-left: 4px solid transparent;
  border-right: 4px solid transparent;
}
.tri-up { border-bottom: 5px solid #777; }
.tri-down { border-top: 5px solid #777; }

/* sheet tabs */
.tabbar {
  height: 27px;
  flex: none;
  background: #e6e6e6;
  box-sizing: border-box;
  border-bottom: 1px solid #d0d0d0;
  display: flex;
  align-items: flex-start;
  position: relative;
}
.tab-nav {
  width: 100px;
  height: 26px;
  flex: none;
  display: flex;
  align-items: center;
  gap: 24px;
  padding-left: 26px;
  box-sizing: border-box;
}
.tri-left, .tri-right {
  width: 0;
  height: 0;
  border-top: 4px solid transparent;
  border-bottom: 4px solid transparent;
}
.tri-left { border-right: 4px solid #c4c4c4; }
.tri-right { border-left: 4px solid #c4c4c4; }
.tri-left.dark { border-right-color: #666; }
.tri-right.dark { border-left-color: #666; }
.sheet-tab {
  width: 82px;
  height: 25px;
  flex: none;
  margin-top: -1px;
  box-sizing: border-box;
  background: #fff;
  border: 1px solid #a8a8a8;
  border-top: 0;
  border-bottom: 2px solid #217346;
  text-align: center;
  line-height: 25px;
  font-size: 12.5px;
  font-weight: 700;
  color: #217346;
}
.add-sheet { margin: 5px 0 0 33px; flex: none; }
.hgrip {
  margin: 8px 0 0 589px;
  width: 2px;
  height: 11px;
  border-left: 2px dotted #a8a8a8;
  box-sizing: border-box;
  flex: none;
}
.hscroll {
  margin: 6px 0 0 14px;
  width: 509px;
  height: 15px;
  flex: none;
  display: flex;
}
.hs-btn {
  width: 15px;
  flex: none;
  box-sizing: border-box;
  border: 1px solid #ababab;
  background: #fff;
  display: flex;
  align-items: center;
  justify-content: center;
}
.hs-track { width: 23px; background: #dcdcdc; flex: none; }
.hs-thumb {
  flex: 1;
  box-sizing: border-box;
  border: 1px solid #ababab;
  background: #fff;
}

/* status bar */
.statusbar {
  height: 22px;
  flex: none;
  background: #f1f1f1;
  display: flex;
  align-items: center;
  padding-left: 7px;
  box-sizing: border-box;
  color: #555;
}
.views {
  margin-left: auto;
  display: flex;
  gap: 25px;
}
.zoom {
  width: 173px;
  margin-left: 17px;
  flex: none;
  display: flex;
  align-items: center;
  color: #aaa;
  font-size: 11px;
}
.z-minus {
  width: 6px;
  height: 2px;
  margin-right: 4px;
  background: #a8a8a8;
}
.z-slider {
  width: 100px;
  height: 1px;
  margin-right: 4px;
  background: #a8a8a8;
  position: relative;
}
.z-slider i {
  position: absolute;
  left: 50px;
  top: -2px;
  width: 1px;
  height: 5px;
  background: #a8a8a8;
}
.z-plus {
  width: 9px;
  height: 9px;
  margin-right: 14px;
  background:
    linear-gradient(#a8a8a8, #a8a8a8) center / 9px 2px no-repeat,
    linear-gradient(#a8a8a8, #a8a8a8) center / 2px 9px no-repeat;
}

/* taskbar */
.taskbar {
  flex: 1;
  padding-left: 14px;
  background: linear-gradient(90deg, #3f7ab8, #4a86c6 40%, #4b87c8 70%, #4a82bf);
  display: flex;
  align-items: center;
  position: relative;
}
.task {
  width: 62px;
  height: 38px;
  flex: none;
  margin-top: 1px;
  box-sizing: border-box;
  display: flex;
  align-items: center;
  justify-content: center;
}
.task.open {
  background: rgba(255, 255, 255, .18);
  border: 1px solid rgba(255, 255, 255, .35);
  width: 58px;
  margin: 1px 2px 0;
}
.task.current-stack {
  background: rgba(255, 255, 255, .32);
  border: 2px solid rgba(255, 255, 255, .8);
  box-shadow: 3px 0 0 -1px rgba(255, 255, 255, .6);
  width: 55px;
  margin: 1px 5px 0 2px;
}
.tray {
  margin-left: auto;
  display: flex;
  align-items: center;
  color: #fff;
  gap: 8.5px;
  padding-right: 26px;
}
.tray-up {
  width: 0;
  height: 0;
  margin-right: 3.5px;
  border-left: 4px solid transparent;
  border-right: 4px solid transparent;
  border-bottom: 4px solid #fff;
}
.clock {
  margin-left: 11px;
  text-align: center;
  font-size: 11px;
  line-height: 17px;
}
</style>

<style>
html, body { margin: 0; overflow: hidden; }
</style>
